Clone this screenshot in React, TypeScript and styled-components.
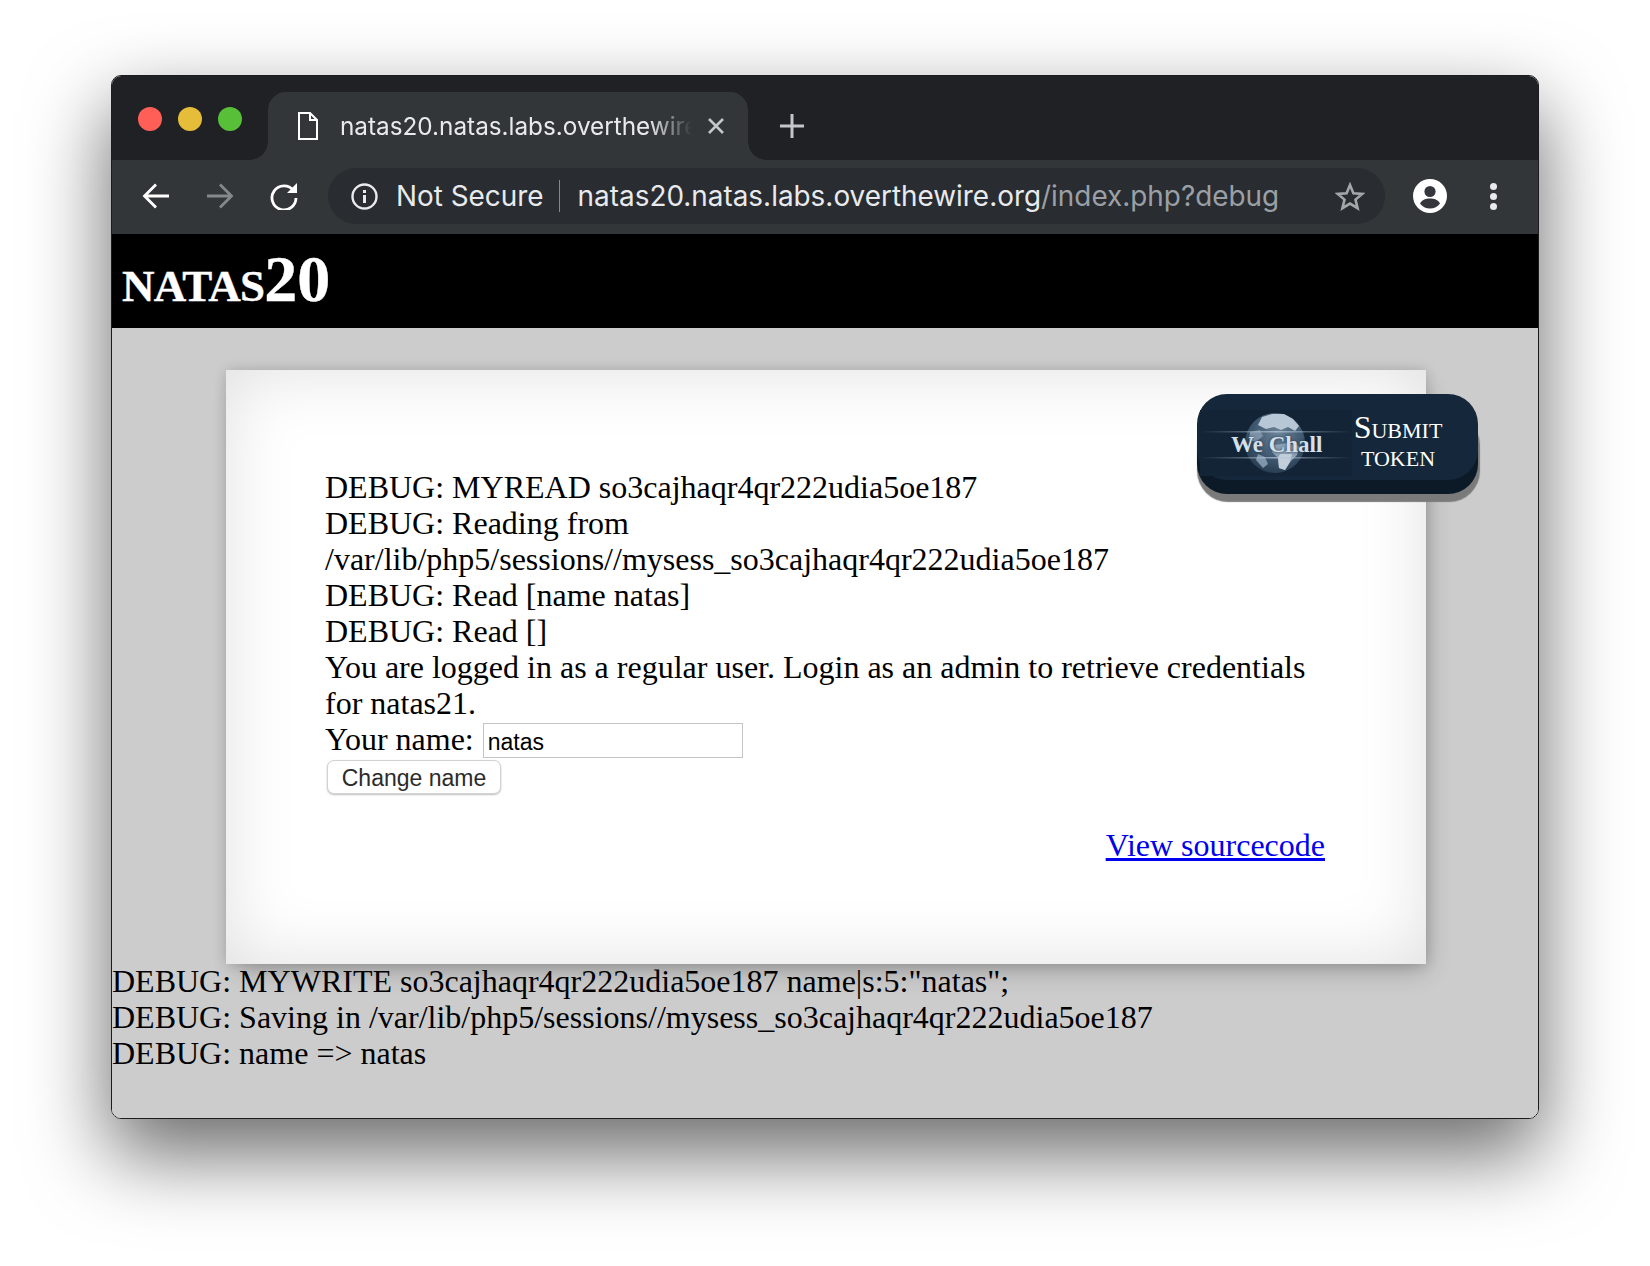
import React from "react";
import styled, { createGlobalStyle } from "styled-components";

const GlobalStyle = createGlobalStyle`
  html, body {
    margin: 0;
    padding: 0;
    background: #ffffff;
  }
`;

const Globe = () => (
  <svg width="152" height="66" viewBox="0 0 152 66" style={{ display: "block" }}>
    <defs>
      <radialGradient id="sphere" cx="55%" cy="35%" r="70%">
        <stop offset="0%" stopColor="#6d8499" />
        <stop offset="60%" stopColor="#3f586f" />
        <stop offset="100%" stopColor="#25394d" />
      </radialGradient>
      <linearGradient id="streak" x1="0" x2="1" y1="0" y2="0">
        <stop offset="0%" stopColor="#8aa0b5" stopOpacity="0" />
        <stop offset="50%" stopColor="#b9c9d8" stopOpacity="0.75" />
        <stop offset="100%" stopColor="#8aa0b5" stopOpacity="0" />
      </linearGradient>
    </defs>
    <rect x="0" y="0" width="152" height="66" fill="#132437" />
    <circle cx="75" cy="33" r="30" fill="url(#sphere)" />
    <path d="M62 7 L72 4 L84 4 L93 9 L99 16 L95 21 L88 17 L81 20 L74 17 L66 19 L58 15Z" fill="#b8c7d5" />
    <path d="M50 22 L60 20 L63 26 L56 32 L49 30Z" fill="#7d92a6" />
    <path d="M74 35 L88 33 L99 36 L97 45 L90 52 L85 60 L79 58 L78 48 L72 42Z" fill="#8ea2b5" />
    <path d="M80 44 L92 44 L90 52 L85 60 L79 58 L78 48Z" fill="#c2cfdb" />
    <path d="M58 44 L65 47 L68 54 L63 58 L56 50Z" fill="#7f95a9" />
    <rect x="0" y="21" width="152" height="1.5" fill="url(#streak)" />
    <rect x="0" y="47" width="152" height="1.5" fill="url(#streak)" />
  </svg>
);

const App: React.FC = () => {
  return (
    <>
      <GlobalStyle />
      <Page>
        <Window>
          <TitleBar>
            <Lights>
              <Light color="#ff5f57" />
              <Light color="#e6bd38" />
              <Light color="#57c038" />
            </Lights>
            <Tab>
              <svg width="20" height="28" viewBox="0 0 20 28" fill="none" stroke="#ffffff" strokeWidth="2">
                <path d="M1 1H12L19 8V27H1Z" />
                <path d="M12 1V8H19" />
              </svg>
              <TabTitle>natas20.natas.labs.overthewire.org/index.php</TabTitle>
              <svg width="16" height="16" viewBox="0 0 16 16" stroke="#c4c7ca" strokeWidth="2.6">
                <path d="M1 1L15 15M15 1L1 15" />
              </svg>
            </Tab>
            <NewTab>
              <svg width="24" height="24" viewBox="0 0 24 24" stroke="#c4c7ca" strokeWidth="3">
                <path d="M12 0V24M0 12H24" />
              </svg>
            </NewTab>
          </TitleBar>
          <Toolbar>
            <NavIcons>
              <svg width="28" height="26" viewBox="0 0 28 26" fill="none" stroke="#ffffff" strokeWidth="2.8">
                <path d="M27 13H3M14 1.5L2.5 13L14 24.5" />
              </svg>
              <svg width="28" height="26" viewBox="0 0 28 26" fill="none" stroke="#85888b" strokeWidth="2.8">
                <path d="M1 13H25M14 1.5L25.5 13L14 24.5" />
              </svg>
              <svg width="28" height="28" viewBox="0 0 28 28" fill="none">
                <path d="M23.5 8.5A12 12 0 1 0 26 16" stroke="#ffffff" strokeWidth="2.8" />
                <path d="M27 1V11H17Z" fill="#ffffff" />
              </svg>
            </NavIcons>
            <Omnibox>
              <svg width="27" height="27" viewBox="0 0 27 27" fill="none">
                <circle cx="13.5" cy="13.5" r="12" stroke="#e8eaed" strokeWidth="2.4" />
                <rect x="12" y="12" width="3" height="8" fill="#e8eaed" />
                <rect x="12" y="7" width="3" height="3" fill="#e8eaed" />
              </svg>
              <Security>Not Secure</Security>
              <Divider />
              <Url>
                natas20.natas.labs.overthewire.org<UrlPath>/index.php?debug</UrlPath>
              </Url>
              <StarIcon>
                <svg width="30" height="29" viewBox="0 0 30 29" fill="none" stroke="#a4a7aa" strokeWidth="2.6" strokeLinejoin="miter">
                  <path d="M15 3L18.4 11.3L27.2 11.9L20.5 17.6L22.6 26.2L15 21.6L7.4 26.2L9.5 17.6L2.8 11.9L11.6 11.3Z" />
                </svg>
              </StarIcon>
            </Omnibox>
            <Profile>
              <svg width="34" height="34" viewBox="0 0 34 34">
                <circle cx="17" cy="17" r="17" fill="#ffffff" />
                <circle cx="17" cy="12.5" r="5.6" fill="#33373b" />
                <path d="M7 24.5C9 20.5 13 19.5 17 19.5C21 19.5 25 20.5 27 24.5C25 27.5 21 29.5 17 29.5C13 29.5 9 27.5 7 24.5Z" fill="#33373b" />
              </svg>
            </Profile>
            <Kebab>
              <Dot />
              <Dot />
              <Dot />
            </Kebab>
          </Toolbar>
          <SiteHeader>
            <SiteName>natas</SiteName>
            <SiteLevel>20</SiteLevel>
          </SiteHeader>
          <Viewport>
            <Card>
              <Line>DEBUG: MYREAD so3cajhaqr4qr222udia5oe187</Line>
              <Line>DEBUG: Reading from</Line>
              <Line>/var/lib/php5/sessions//mysess_so3cajhaqr4qr222udia5oe187</Line>
              <Line>DEBUG: Read [name natas]</Line>
              <Line>DEBUG: Read []</Line>
              <Line>You are logged in as a regular user. Login as an admin to retrieve credentials for natas21.</Line>
              <FormRow>
                Your name: <NameInput defaultValue="natas" />
              </FormRow>
              <ChangeButton>Change name</ChangeButton>
              <SourceLink href="#">View sourcecode</SourceLink>
            </Card>
            <WeChall>
              <WeChallLogo>
                <Globe />
                <WeChallName>We Chall</WeChallName>
              </WeChallLogo>
              <SubmitLabel>
                Submit
                <br />
                token
              </SubmitLabel>
            </WeChall>
            <Footer>
              <Line>DEBUG: MYWRITE so3cajhaqr4qr222udia5oe187 name|s:5:"natas";</Line>
              <Line>DEBUG: Saving in /var/lib/php5/sessions//mysess_so3cajhaqr4qr222udia5oe187</Line>
              <Line>DEBUG: name =&gt; natas</Line>
            </Footer>
          </Viewport>
        </Window>
      </Page>
    </>
  );
};

const Page = styled.div`
  width: 1650px;
  height: 1266px;
  box-sizing: border-box;
  padding: 75px 111px 149px 111px;
  overflow: hidden;
`;

const Window = styled.div`
  height: 100%;
  display: flex;
  flex-direction: column;
  border: 1px solid #1c1c1e;
  border-radius: 10px;
  overflow: hidden;
  box-shadow: 0 34px 80px 2px rgba(0, 0, 0, 0.58);
`;

const TitleBar = styled.div`
  flex: 0 0 84px;
  display: flex;
  align-items: flex-end;
  background: #202124;
`;

const Lights = styled.div`
  width: 156px;
  align-self: flex-start;
  box-sizing: border-box;
  padding: 31px 0 0 26px;
  display: flex;
  gap: 16px;
`;

const Light = styled.span<{ color: string }>`
  width: 24px;
  height: 24px;
  border-radius: 50%;
  background: ${(p) => p.color};
`;

const Tab = styled.div`
  position: relative;
  width: 480px;
  height: 68px;
  box-sizing: border-box;
  padding: 0 24px 0 30px;
  display: flex;
  align-items: center;
  background: #323639;
  border-radius: 18px 18px 0 0;
  font-family: Inter, "Liberation Sans", sans-serif;

  &::before,
  &::after {
    content: "";
    position: absolute;
    bottom: 0;
    width: 18px;
    height: 18px;
  }
  &::before {
    left: -18px;
    background: radial-gradient(circle at 0 0, #202124 17.5px, #323639 18px);
  }
  &::after {
    right: -18px;
    background: radial-gradient(circle at 100% 0, #202124 17.5px, #323639 18px);
  }
`;

const TabTitle = styled.span`
  flex: 1;
  margin: 0 16px 0 22px;
  overflow: hidden;
  white-space: nowrap;
  font-size: 24.3px;
  color: #e8eaed;
  -webkit-mask-image: linear-gradient(to right, #000 88%, transparent 100%);
  mask-image: linear-gradient(to right, #000 88%, transparent 100%);
`;

const NewTab = styled.div`
  height: 68px;
  margin-left: 32px;
  display: flex;
  align-items: center;
`;

const Toolbar = styled.div`
  flex: 0 0 74px;
  box-sizing: border-box;
  padding-bottom: 2px;
  display: flex;
  align-items: center;
  background: #323639;
  font-family: Inter, "Liberation Sans", sans-serif;
`;

const NavIcons = styled.div`
  width: 216px;
  box-sizing: border-box;
  padding-left: 30px;
  margin-top: -1px;
  display: flex;
  align-items: center;
  gap: 36px;
`;

const Omnibox = styled.div`
  width: 1057px;
  height: 56px;
  box-sizing: border-box;
  padding-left: 23px;
  display: flex;
  align-items: center;
  background: #292c30;
  border-radius: 28px;
`;

const Security = styled.span`
  margin-left: 18px;
  font-size: 27.9px;
  color: #e8eaed;
`;

const Divider = styled.span`
  width: 1px;
  height: 32px;
  margin: 0 18px 0 15px;
  background: #85888b;
`;

const Url = styled.span`
  flex: 1;
  font-size: 27.9px;
  white-space: nowrap;
  color: #e8eaed;
`;

const UrlPath = styled.span`
  color: #9aa0a6;
`;

const StarIcon = styled.span`
  display: flex;
  margin-right: 20px;
`;

const Profile = styled.div`
  display: flex;
  margin-left: 28px;
`;

const Kebab = styled.div`
  margin-left: 43px;
  display: flex;
  flex-direction: column;
  gap: 3px;
`;

const Dot = styled.span`
  width: 7px;
  height: 7px;
  border-radius: 50%;
  background: #e8eaed;
`;

const SiteHeader = styled.h1`
  flex: 0 0 94px;
  min-height: 0;
  box-sizing: border-box;
  margin: 0;
  padding: 0 0 0 10px;
  overflow: hidden;
  background: #000000;
  color: #ffffff;
  font: small-caps bold 64px/92px "Liberation Serif", serif;
  -webkit-text-stroke: 0.4px #ffffff;
`;

const SiteName = styled.span`
  letter-spacing: -0.7px;
`;

const SiteLevel = styled.span`
  font-size: 66px;
  line-height: 1;
`;

const Viewport = styled.main`
  position: relative;
  flex: 1;
  min-height: 0;
  padding-top: 42px;
  background: #cccccc;
  font: 32px/36px "Liberation Serif", serif;
  color: #000000;
`;

const Card = styled.section`
  width: 1200px;
  height: 594px;
  box-sizing: border-box;
  margin-left: 114px;
  padding: 99px 101px 0 99px;
  background: #ffffff;
  box-shadow: inset 0 0 70px rgba(0, 0, 0, 0.13), 0 0 12px rgba(0, 0, 0, 0.16),
    6px 12px 24px -6px rgba(0, 0, 0, 0.24);
`;

const Line = styled.div`
  width: fit-content;
`;

const FormRow = styled.div`
  display: flex;
  align-items: flex-start;
  gap: 1px;
  white-space: pre;
`;

const NameInput = styled.input`
  width: 260px;
  height: 35px;
  box-sizing: border-box;
  margin-top: 2px;
  padding: 3px 4px 0;
  border: 1.5px solid #c4c4c4;
  background: #ffffff;
  font: 23px "Liberation Sans", sans-serif;
  color: #000000;
  outline: none;
`;

const ChangeButton = styled.button`
  display: block;
  width: 174px;
  height: 34px;
  margin: 2px 0 0 2px;
  padding: 2px 0 0;
  border: 1px solid #d2d2d2;
  border-radius: 7px;
  background: #ffffff;
  box-shadow: 0 1px 2px rgba(0, 0, 0, 0.25);
  font: 23px "Liberation Sans", sans-serif;
  color: #2b2b2b;
`;

const SourceLink = styled.a`
  display: block;
  width: fit-content;
  margin: 33px 0 0 auto;
  color: #0000ee;
  text-decoration: underline;
`;

const WeChall = styled.div`
  position: absolute;
  top: 66px;
  left: 1085px;
  width: 281px;
  height: 86px;
  box-sizing: border-box;
  display: flex;
  align-items: center;
  background: #15273a;
  border-radius: 30px;
  box-shadow: 0 14px 0 #0c1a27, 1px 21px 1px 1px #7a7a7a;
`;

const WeChallLogo = styled.div`
  position: relative;
  flex: none;
  width: 152px;
  margin: 12px 0 0 3px;
`;

const WeChallName = styled.span`
  position: absolute;
  top: 21px;
  left: 31px;
  font: bold 23px/28px "Liberation Serif", serif;
  color: #d5e0ea;
  text-shadow: 0 0 3px #1b2d40;
  white-space: nowrap;
`;

const SubmitLabel = styled.div`
  flex: 1;
  margin-top: 8px;
  padding-right: 34px;
  text-align: center;
  font: small-caps 32px/28px "Liberation Serif", serif;
  color: #ffffff;
`;

const Footer = styled.div`
  margin-top: -1px;
`;

export default App;
